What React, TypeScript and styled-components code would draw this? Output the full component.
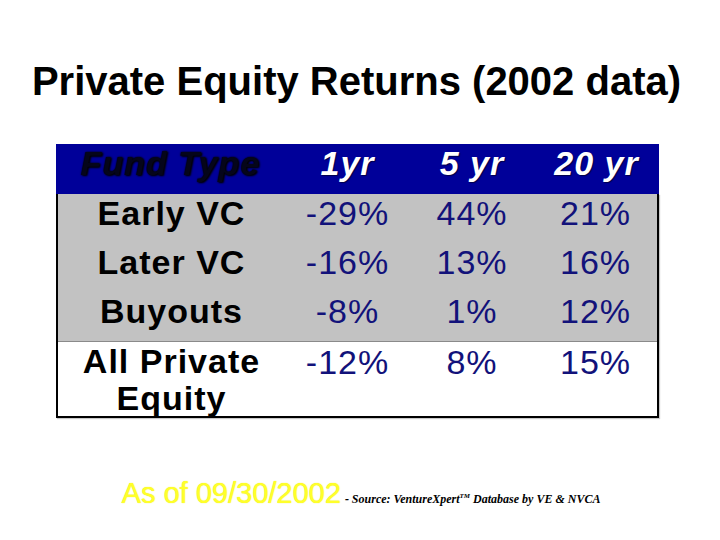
import styled, { createGlobalStyle } from 'styled-components';

const GlobalStyle = createGlobalStyle`
  html, body {
    margin: 0;
    padding: 0;
    background: #ffffff;
  }
`;

const Slide = styled.div`
  width: 720px;
  height: 540px;
  display: flex;
  flex-direction: column;
  align-items: center;
  padding-top: 58px;
  box-sizing: border-box;
  font-family: "Liberation Sans", Arial, sans-serif;
  overflow: hidden;
`;

const Title = styled.h1`
  margin: 0 7px 0 0;
  font-size: 40px;
  line-height: 46px;
  font-weight: bold;
  color: #000000;
  white-space: nowrap;
`;

const Table = styled.div`
  width: 603px;
  margin-top: 40px;
  margin-right: 5px;
  display: flex;
  flex-direction: column;
`;

const HeaderRow = styled.div`
  display: grid;
  grid-template-columns: 229px 125px 124px 125px;
  height: 50px;
  background: #000099;
`;

const HeaderCell = styled.div<{ $dark?: boolean }>`
  text-align: center;
  font-size: 34px;
  line-height: 38px;
  letter-spacing: 1px;
  font-weight: bold;
  font-style: italic;
  white-space: nowrap;
  color: ${(p) => (p.$dark ? '#05051a' : '#ffffff')};
  text-shadow: ${(p) =>
    p.$dark ? '1px 1px 2px #000000, 0 0 2px #000000' : '1px 1px 1px #00004a'};
`;

const Body = styled.div`
  border: 2px solid #000000;
  border-top: none;
  box-shadow: 1px 1px 1px #c8c8c8;
`;

const Row = styled.div<{ $shaded?: boolean; $last?: boolean; $tall?: boolean }>`
  display: grid;
  grid-template-columns: 227px 125px 124px 123px;
  align-items: start;
  height: ${(p) => (p.$tall ? '73px' : '49px')};
  padding-top: ${(p) => (p.$tall ? '1px' : '0')};
  box-sizing: content-box;
  background: ${(p) => (p.$shaded ? '#c2c2c2' : '#ffffff')};
  border-bottom: ${(p) => (p.$last ? '1px solid #8a8a8a' : 'none')};
`;

const Label = styled.div`
  text-align: center;
  font-size: 34px;
  line-height: 38px;
  letter-spacing: 1px;
  font-weight: bold;
  color: #000000;
`;

const LabelTall = styled(Label)`
  line-height: 37px;
`;

const Value = styled.div`
  text-align: center;
  font-size: 34px;
  line-height: 38px;
  letter-spacing: 1px;
  color: #12127a;
`;

const Footer = styled.div`
  display: flex;
  align-items: baseline;
  justify-content: center;
  margin-top: 59px;
  margin-left: 2px;
  white-space: nowrap;
`;

const AsOf = styled.span`
  font-size: 29px;
  line-height: 32px;
  color: #ffff2a;
  text-shadow: 0 0 1px #e8e800;
`;

const Source = styled.span`
  font-family: "Liberation Serif", "Times New Roman", serif;
  font-size: 12px;
  font-style: italic;
  font-weight: bold;
  color: #000000;
  margin-left: 4px;
`;

const Tm = styled.sup`
  font-size: 7px;
  vertical-align: 5px;
`;

const rows = [
  { label: 'Early VC', values: ['-29%', '44%', '21%'] },
  { label: 'Later VC', values: ['-16%', '13%', '16%'] },
  { label: 'Buyouts', values: ['-8%', '1%', '12%'] },
];

export default function App() {
  return (
    <>
      <GlobalStyle />
      <Slide>
        <Title>Private Equity Returns (2002 data)</Title>
        <Table>
          <HeaderRow>
            <HeaderCell $dark>Fund Type</HeaderCell>
            <HeaderCell>1yr</HeaderCell>
            <HeaderCell>5 yr</HeaderCell>
            <HeaderCell>20 yr</HeaderCell>
          </HeaderRow>
          <Body>
            {rows.map((r, i) => (
              <Row key={r.label} $shaded $last={i === rows.length - 1}>
                <Label>{r.label}</Label>
                {r.values.map((v) => (
                  <Value key={v}>{v}</Value>
                ))}
              </Row>
            ))}
            <Row $tall>
              <LabelTall>
                All Private
                <br />
                Equity
              </LabelTall>
              <Value>-12%</Value>
              <Value>8%</Value>
              <Value>15%</Value>
            </Row>
          </Body>
        </Table>
        <Footer>
          <AsOf>As of 09/30/2002</AsOf>
          <Source>
            - Source: VentureXpert<Tm>TM</Tm> Database by VE &amp; NVCA
          </Source>
        </Footer>
      </Slide>
    </>
  );
}
